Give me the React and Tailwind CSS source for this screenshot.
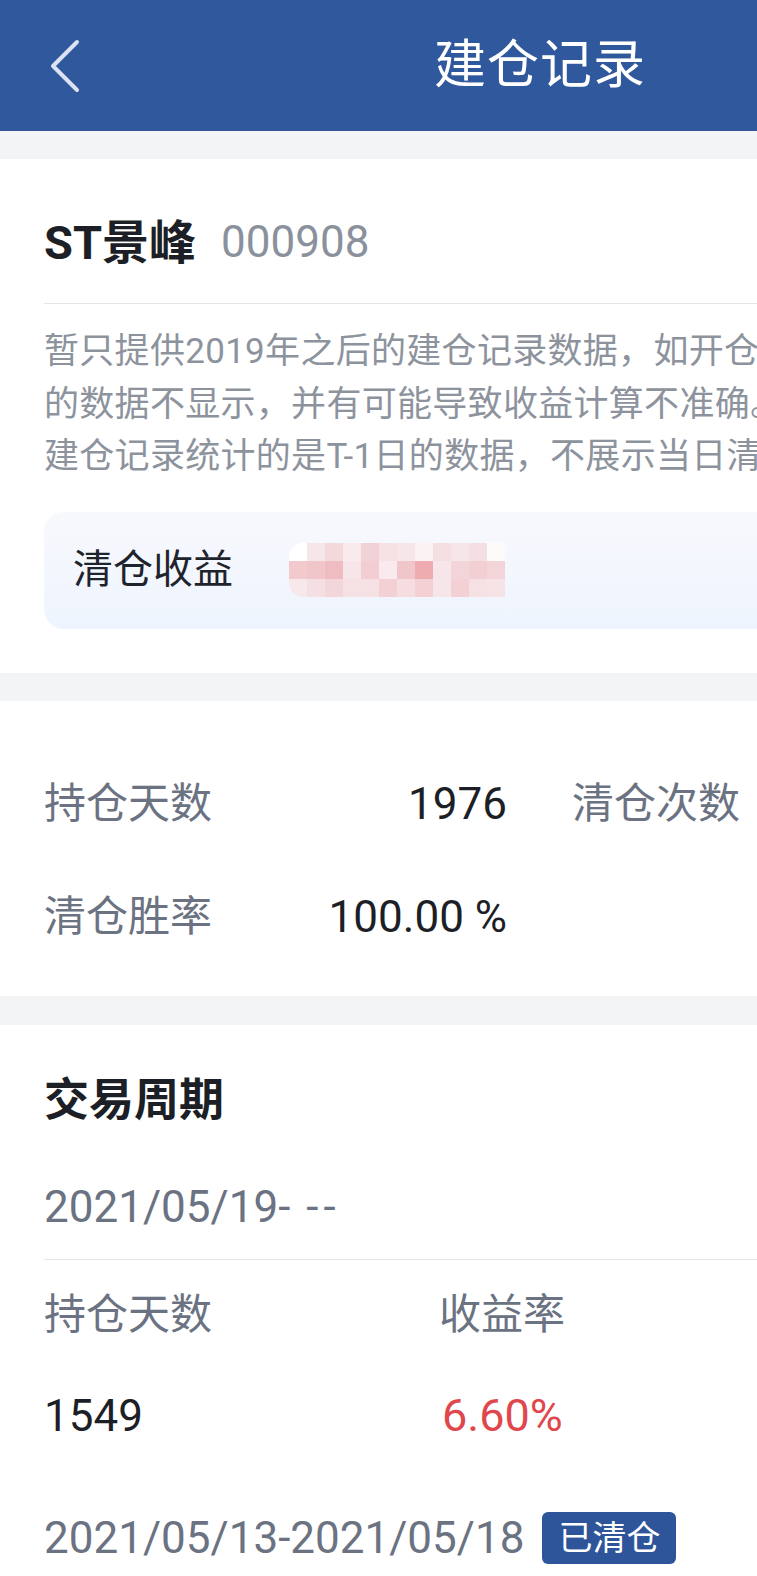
import React from "react";

const mosaic = [
  ["bg-white", "bg-[#f7e6e9]", "bg-[#f3d8dc]", "bg-[#f8eaed]", "bg-[#f1d2d6]", "bg-[#f6e2e5]", "bg-[#f7e6e9]", "bg-[#fbf2f3]", "bg-[#f5dfe2]", "bg-[#f7e6e9]", "bg-[#f5dfe2]", "bg-[#fdfafa]"],
  ["bg-[#f2c9cd]", "bg-[#f1c6ca]", "bg-[#efbcc1]", "bg-[#f7e6e9]", "bg-[#f2cdd1]", "bg-[#f8eaed]", "bg-[#f0c6cb]", "bg-[#eeacb1]", "bg-[#f7e6e9]", "bg-[#f3d4d8]", "bg-[#f1cfd3]", "bg-[#f3d5d9]"],
  ["bg-[#f7e8eb]", "bg-[#f5dfe2]", "bg-[#f3d6da]", "bg-[#f5e0e3]", "bg-[#f5e0e3]", "bg-[#f2d0d4]", "bg-[#f5dde0]", "bg-[#f2d0d4]", "bg-[#f7e6e9]", "bg-[#f2d0d4]", "bg-[#f5e0e3]", "bg-[#f6e3e6]"],
];

export default function App() {
  const font = { fontFamily: 'Roboto, "Noto Sans CJK SC", sans-serif' };
  return (
    <div className="w-[757px] min-h-[1576px] overflow-hidden bg-white" style={font}>
      <div className="w-[1080px]">
        {/* Header */}
        <div className="relative h-[131px] bg-[#30589c] flex items-center justify-center">
          <svg className="absolute left-[46px] top-[38px]" width="40" height="56" viewBox="0 0 40 56">
            <polyline points="31,4 7,28 31,52" fill="none" stroke="#dde2f2" strokeWidth="4" strokeLinecap="round" strokeLinejoin="round" />
          </svg>
          <div className="text-white text-[52px] leading-[60px] tracking-[1px]">建仓记录</div>
        </div>
        <div className="h-[28px] bg-[#f2f4f6]" />

        {/* Card 1 */}
        <div className="px-[44px] pt-[41px] pb-[44px] bg-white">
          <div className="h-[84px] flex items-center">
            <span className="text-[47px] font-bold text-[#1c1f26] leading-none">ST景峰</span>
            <span className="ml-[25px] text-[44px] text-[#8b919c] leading-none">000908</span>
          </div>
          <div className="mt-[19px] h-px bg-[#e3e5e8] -mr-[44px]" />
          <div className="mt-[22px] text-[35px] leading-[52.5px] tracking-[0.3px] text-[#8d939d] whitespace-nowrap">
            <div>暂只提供2019年之后的建仓记录数据，如开仓时间早于2019年，则之前</div>
            <div>的数据不显示，并有可能导致收益计算不准确。</div>
            <div>建仓记录统计的是T-1日的数据，不展示当日清仓记录。</div>
          </div>
          <div className="mt-[28px] h-[117px] rounded-[20px] bg-gradient-to-b from-[#f8f9fd] to-[#eef4fe] flex items-center pl-[29px]">
            <span className="text-[40px] leading-none text-[#1f232b]">清仓收益</span>
            <div className="ml-[56px] flex flex-col rounded-l-[14px] overflow-hidden">
              {mosaic.map((row, i) => (
                <div key={i} className="flex">
                  {row.map((c, j) => (
                    <div key={j} className={`w-[18px] h-[18px] ${c}`} />
                  ))}
                </div>
              ))}
            </div>
          </div>
        </div>
        <div className="h-[28px] bg-[#f2f4f6]" />

        {/* Card 2 */}
        <div className="px-[44px] pt-[73px] pb-[49px] bg-white">
          <div className="h-[60px] flex items-center">
            <div className="w-[463px] flex items-center justify-between">
              <span className="text-[42px] leading-none text-[#6b7281]">持仓天数</span>
              <span className="text-[44px] leading-none text-[#1c1f26]">1976</span>
            </div>
            <span className="ml-[65px] text-[42px] leading-none text-[#6b7281]">清仓次数</span>
          </div>
          <div className="mt-[53px] h-[60px] flex items-center">
            <div className="w-[463px] flex items-center justify-between">
              <span className="text-[42px] leading-none text-[#6b7281]">清仓胜率</span>
              <span className="text-[44px] leading-none text-[#1c1f26]">100.00 %</span>
            </div>
          </div>
        </div>
        <div className="h-[29px] bg-[#f2f4f6]" />

        {/* Card 3 */}
        <div className="px-[44px] pt-[46px] pb-[40px] bg-white">
          <div className="h-[60px] flex items-center">
            <span className="text-[45px] font-bold leading-none text-[#1c1f26]">交易周期</span>
          </div>
          <div className="mt-[46px] h-[60px] flex items-center">
            <span className="text-[44px] leading-none text-[#6b7281]">
              2021/05/19<span className="tracking-[5px]">-</span> <span className="tracking-[5px]">--</span>
            </span>
          </div>
          <div className="mt-[22px] h-px bg-[#e3e5e8] -mr-[44px]" />
          <div className="mt-[25px] h-[60px] flex items-center">
            <span className="w-[395px] text-[42px] leading-none text-[#6b7281]">持仓天数</span>
            <span className="text-[42px] leading-none text-[#6b7281]">收益率</span>
          </div>
          <div className="mt-[41px] h-[60px] flex items-center">
            <span className="w-[398px] text-[44px] leading-none text-[#1c1f26]">1549</span>
            <span className="text-[45px] leading-none text-[#e0474c]">6.60%</span>
          </div>
          <div className="mt-[62px] h-[60px] flex items-center">
            <span className="text-[44px] leading-none text-[#6b7281]">2021/05/13-2021/05/18</span>
            <span className="ml-[18px] h-[52px] px-[16px] rounded-[6px] bg-[#2e5599] text-white text-[34px] leading-[52px]">已清仓</span>
          </div>
        </div>
      </div>
    </div>
  );
}
